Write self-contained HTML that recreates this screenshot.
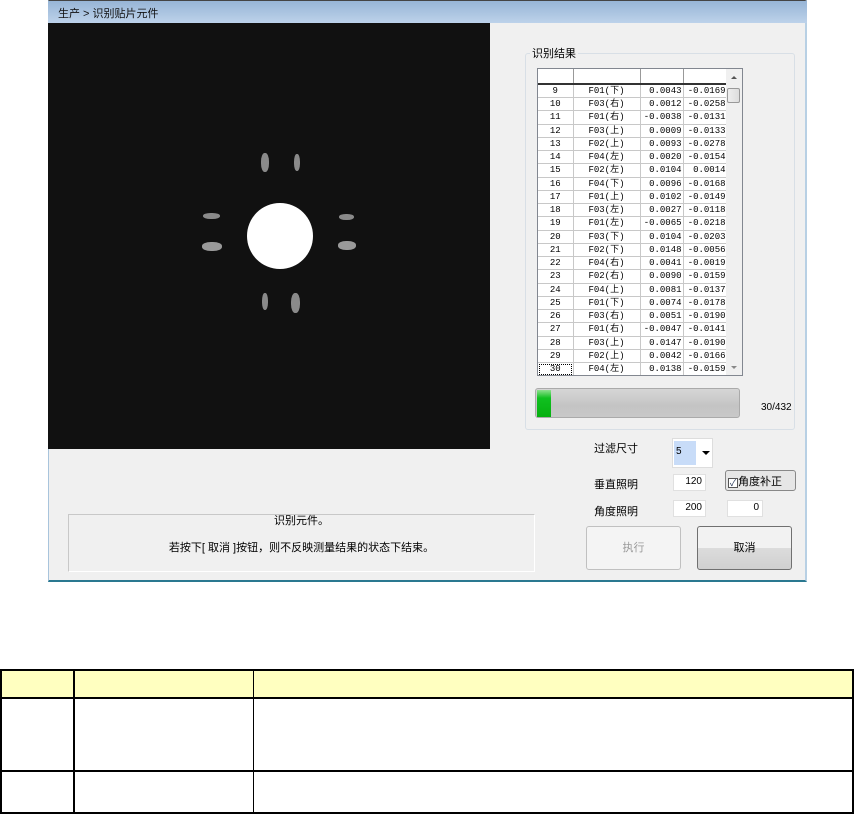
<!DOCTYPE html>
<html><head><meta charset="utf-8"><style>
*{margin:0;padding:0;box-sizing:border-box}
body{width:854px;height:814px;background:#fff;position:relative;overflow:hidden;font-family:"Liberation Sans","Noto Sans CJK SC",sans-serif;font-size:11px;color:#000}
.a{position:absolute}
.win{left:48px;top:0;width:759px;height:582px;background:#f0f0f0;border-left:1px solid #a8c4dc;border-right:2px solid #b8d0e4;border-bottom:2px solid #2a7890;border-top:1px solid #444}
.title{left:48px;top:1px;width:759px;height:22px;background:linear-gradient(#97b5d6,#bdd2ea);font-size:11px;padding:4px 0 0 10px;color:#111}
.img{left:48px;top:23px;width:442px;height:426px;background:#111}
.grp{left:525px;top:53px;width:270px;height:377px;border:1px solid #d8dfe6;border-radius:3px}
.lst{left:537px;top:68px;width:206px;height:308px;background:#fff;border:1px solid #828790;overflow:hidden}
table{border-collapse:collapse;table-layout:fixed;width:189px;font-family:"Liberation Mono","Noto Sans CJK SC",monospace;font-size:9px;position:absolute;left:0;top:0}
td{height:13.25px;border-right:1px solid #c8c8c8;border-bottom:1px solid #c8c8c8;padding:0 1px;white-space:nowrap;line-height:12px;overflow:hidden}
tr.h td{height:15px;border-right:1px solid #999;border-bottom:2px solid #333}
.c1{width:35px;text-align:center}.c2{width:67px;text-align:center}.c3{width:43px;text-align:right}.c4{width:44px;text-align:right}
.sb{left:188px;top:0;width:16px;height:306px;background:#f0f0f0}
.btn{border:1px solid #707070;border-radius:3px;background:linear-gradient(#f2f2f2 50%,#dcdcdc 50%,#d0d0d0);text-align:center}
.ed{background:#fff;border:1px solid #e0e0e0;text-align:right;padding-right:3px;font-size:10px;line-height:14px}
.blob{position:absolute;background:#8a8a8a;border-radius:45%}
</style></head><body>
<div class="a win"></div>
<div class="a title">生产 &gt; 识别贴片元件</div>
<div class="a img">
 <div class="a" style="left:199px;top:180px;width:66px;height:66px;border-radius:50%;background:#fff"></div>
 <div class="blob" style="left:213px;top:130px;width:8px;height:19px"></div>
 <div class="blob" style="left:246px;top:131px;width:6px;height:17px"></div>
 <div class="blob" style="left:155px;top:190px;width:17px;height:6px"></div>
 <div class="blob" style="left:154px;top:219px;width:20px;height:9px;background:#9a9a9a"></div>
 <div class="blob" style="left:291px;top:191px;width:15px;height:6px"></div>
 <div class="blob" style="left:290px;top:218px;width:18px;height:9px;background:#9a9a9a"></div>
 <div class="blob" style="left:214px;top:270px;width:6px;height:17px"></div>
 <div class="blob" style="left:243px;top:270px;width:9px;height:20px"></div>
</div>
<div class="a grp"></div>
<div class="a" style="left:530px;top:45px;background:#f0f0f0;padding:0 2px;font-size:11px">识别结果</div>
<div class="a lst">
<table>
<tr class="h"><td class="c1"></td><td class="c2"></td><td class="c3"></td><td class="c4"></td></tr>
<tr><td class="c1">9</td><td class="c2">F01(下)</td><td class="c3">0.0043</td><td class="c4">-0.0169</td></tr>
<tr><td class="c1">10</td><td class="c2">F03(右)</td><td class="c3">0.0012</td><td class="c4">-0.0258</td></tr>
<tr><td class="c1">11</td><td class="c2">F01(右)</td><td class="c3">-0.0038</td><td class="c4">-0.0131</td></tr>
<tr><td class="c1">12</td><td class="c2">F03(上)</td><td class="c3">0.0009</td><td class="c4">-0.0133</td></tr>
<tr><td class="c1">13</td><td class="c2">F02(上)</td><td class="c3">0.0093</td><td class="c4">-0.0278</td></tr>
<tr><td class="c1">14</td><td class="c2">F04(左)</td><td class="c3">0.0020</td><td class="c4">-0.0154</td></tr>
<tr><td class="c1">15</td><td class="c2">F02(左)</td><td class="c3">0.0104</td><td class="c4">0.0014</td></tr>
<tr><td class="c1">16</td><td class="c2">F04(下)</td><td class="c3">0.0096</td><td class="c4">-0.0168</td></tr>
<tr><td class="c1">17</td><td class="c2">F01(上)</td><td class="c3">0.0102</td><td class="c4">-0.0149</td></tr>
<tr><td class="c1">18</td><td class="c2">F03(左)</td><td class="c3">0.0027</td><td class="c4">-0.0118</td></tr>
<tr><td class="c1">19</td><td class="c2">F01(左)</td><td class="c3">-0.0065</td><td class="c4">-0.0218</td></tr>
<tr><td class="c1">20</td><td class="c2">F03(下)</td><td class="c3">0.0104</td><td class="c4">-0.0203</td></tr>
<tr><td class="c1">21</td><td class="c2">F02(下)</td><td class="c3">0.0148</td><td class="c4">-0.0056</td></tr>
<tr><td class="c1">22</td><td class="c2">F04(右)</td><td class="c3">0.0041</td><td class="c4">-0.0019</td></tr>
<tr><td class="c1">23</td><td class="c2">F02(右)</td><td class="c3">0.0090</td><td class="c4">-0.0159</td></tr>
<tr><td class="c1">24</td><td class="c2">F04(上)</td><td class="c3">0.0081</td><td class="c4">-0.0137</td></tr>
<tr><td class="c1">25</td><td class="c2">F01(下)</td><td class="c3">0.0074</td><td class="c4">-0.0178</td></tr>
<tr><td class="c1">26</td><td class="c2">F03(右)</td><td class="c3">0.0051</td><td class="c4">-0.0190</td></tr>
<tr><td class="c1">27</td><td class="c2">F01(右)</td><td class="c3">-0.0047</td><td class="c4">-0.0141</td></tr>
<tr><td class="c1">28</td><td class="c2">F03(上)</td><td class="c3">0.0147</td><td class="c4">-0.0190</td></tr>
<tr><td class="c1">29</td><td class="c2">F02(上)</td><td class="c3">0.0042</td><td class="c4">-0.0166</td></tr>
<tr><td class="c1" style="outline:1px dotted #000;outline-offset:-2px">30</td><td class="c2">F04(左)</td><td class="c3">0.0138</td><td class="c4">-0.0159</td></tr>
</table>
<div class="a sb">
 <div class="a" style="left:5px;top:7px;border:3px solid transparent;border-bottom:3px solid #555;border-top:0;width:0"></div>
 <div class="a" style="left:1px;top:19px;width:13px;height:15px;border:1px solid #999;border-radius:2px;background:linear-gradient(90deg,#eee,#ddd)"></div>
 <div class="a" style="left:5px;top:297px;border:3px solid transparent;border-top:3px solid #888;border-bottom:0;width:0"></div>
</div>
</div>
<div class="a" style="left:535px;top:388px;width:205px;height:30px;border:1px solid #aaa;border-radius:3px;background:linear-gradient(#d6d6d6,#c4c4c4 60%,#c8c8c8)"></div>
<div class="a" style="left:537px;top:390px;width:14px;height:27px;background:linear-gradient(#8ee08e,#10c020 30%,#06b010)"></div>
<div class="a" style="left:761px;top:402px;font-size:10px">30/432</div>
<div class="a" style="left:594px;top:440px">过滤尺寸</div>
<div class="a" style="left:672px;top:438px;width:41px;height:30px;background:#fff;border:1px solid #ddd"></div>
<div class="a" style="left:674px;top:441px;width:22px;height:24px;background:#c8dcf8;font-size:10px;padding:5px 0 0 2px">5</div>
<div class="a" style="left:702px;top:451px;border:4px solid transparent;border-top:4px solid #000;border-bottom:0;width:0"></div>
<div class="a" style="left:594px;top:476px">垂直照明</div>
<div class="a ed" style="left:673px;top:474px;width:33px;height:17px">120</div>
<div class="a btn" style="left:725px;top:470px;width:71px;height:21px;background:#e6e6e6;border-color:#888;padding-top:2px;font-size:11px;text-align:left;padding-left:2px"><span style="display:inline-block;width:10px;height:10px;border:1px solid #555;background:#fff;font-size:9px;line-height:9px;text-align:center;color:#235;vertical-align:-1px">✓</span>角度补正</div>
<div class="a" style="left:594px;top:503px">角度照明</div>
<div class="a ed" style="left:673px;top:500px;width:33px;height:17px">200</div>
<div class="a ed" style="left:727px;top:500px;width:36px;height:17px">0</div>
<div class="a" style="left:586px;top:526px;width:95px;height:44px;border:1px solid #c0c0c0;border-radius:3px;background:#f4f4f4;color:#999;text-align:center;line-height:42px">执行</div>
<div class="a btn" style="left:697px;top:526px;width:95px;height:44px;line-height:42px">取消</div>
<div class="a" style="left:68px;top:514px;width:467px;height:58px;border:1px solid #c8c8c8;border-right-color:#fff;border-bottom-color:#fff"></div>
<div class="a" style="left:68px;top:512px;width:467px;text-align:center;font-size:11px">识别元件。</div>
<div class="a" style="left:68px;top:539px;width:467px;text-align:center;font-size:11px">若按下[ 取消 ]按钮，则不反映测量结果的状态下结束。</div>

<div class="a" style="left:0;top:669px;width:854px;height:145px;border:2px solid #000"></div>
<div class="a" style="left:2px;top:671px;width:850px;height:28px;background:#ffffc0;border-bottom:2px solid #000"></div>
<div class="a" style="left:2px;top:770px;width:850px;height:2px;background:#000"></div>
<div class="a" style="left:73px;top:671px;width:2px;height:141px;background:#000"></div>
<div class="a" style="left:253px;top:671px;width:1px;height:141px;background:#000"></div>
</body></html>
